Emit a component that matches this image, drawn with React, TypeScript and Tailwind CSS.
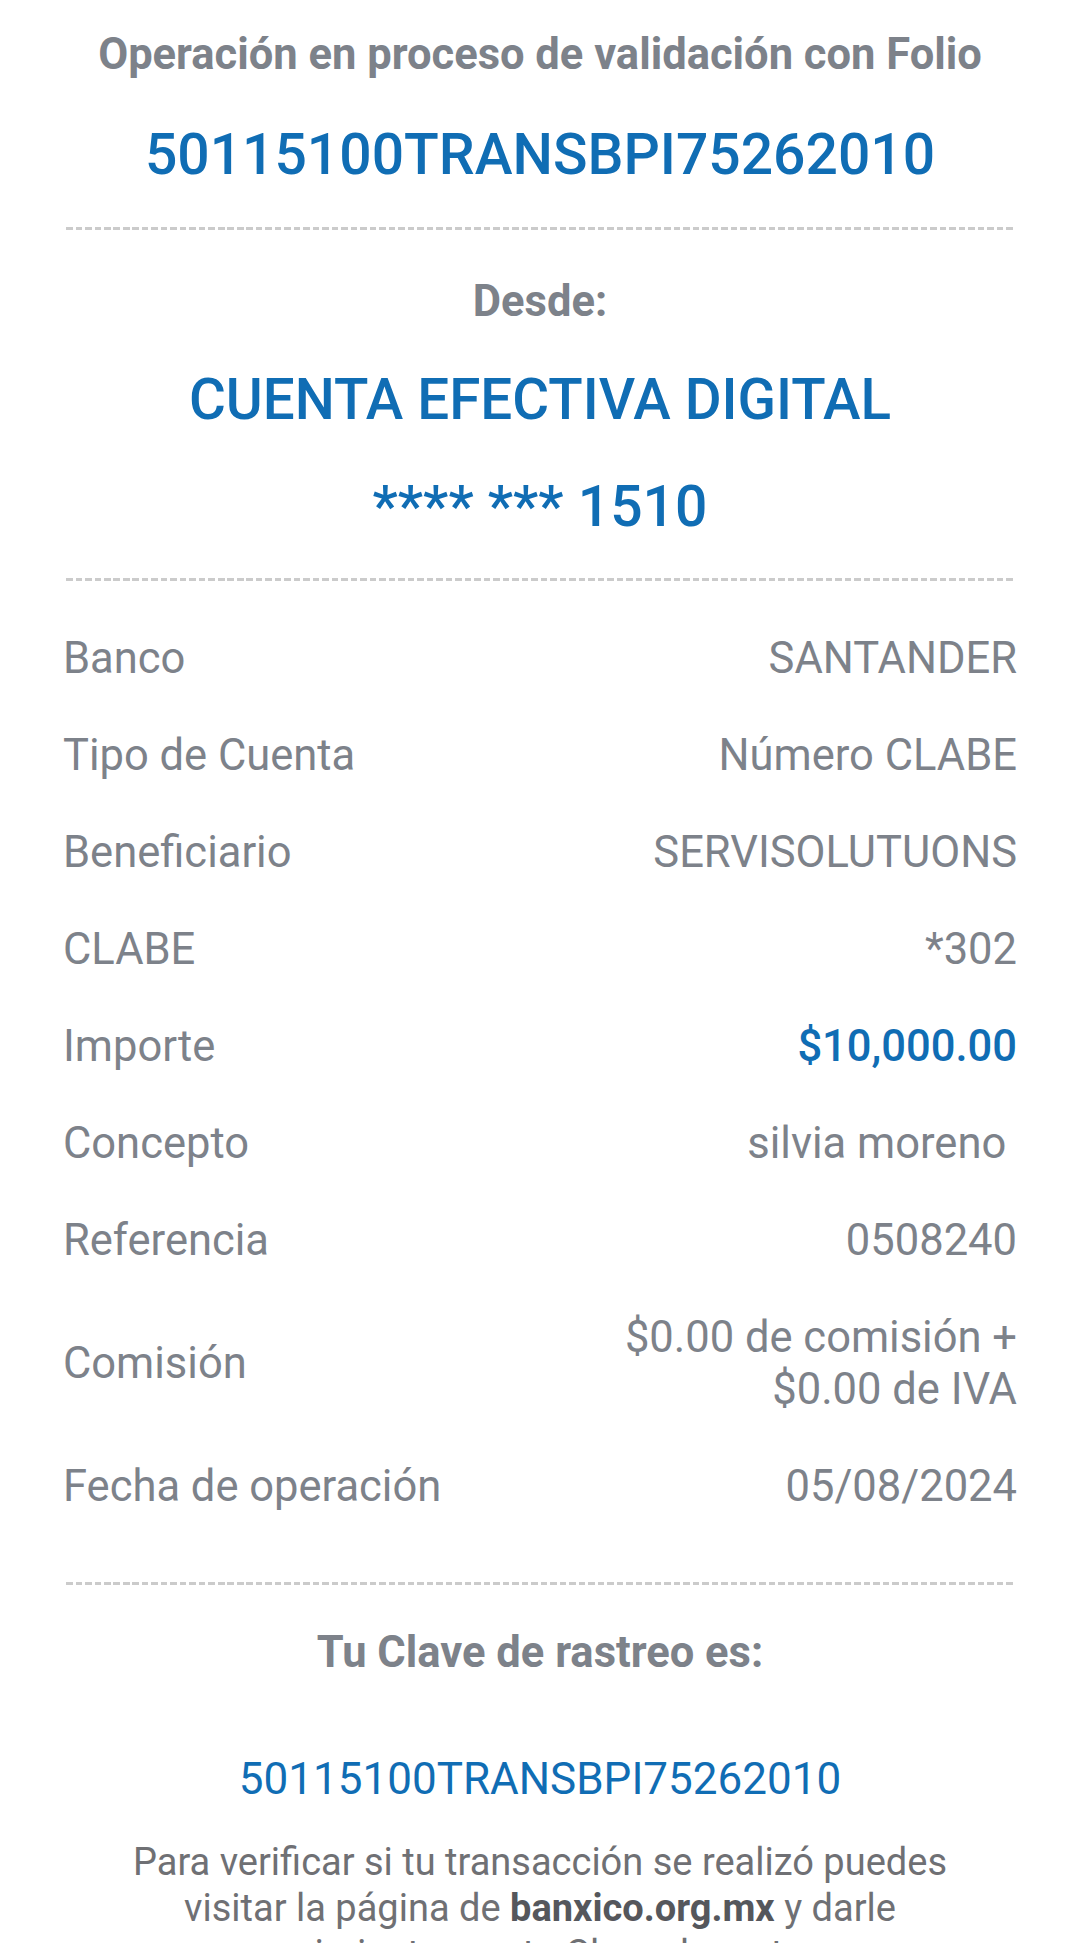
const rows: { label: string; value: string[]; accent?: boolean }[] = [
  { label: "Banco", value: ["SANTANDER"] },
  { label: "Tipo de Cuenta", value: ["Número CLABE"] },
  { label: "Beneficiario", value: ["SERVISOLUTUONS"] },
  { label: "CLABE", value: ["*302"] },
  { label: "Importe", value: ["$10,000.00"], accent: true },
  { label: "Concepto", value: ["silvia moreno\u00a0"] },
  { label: "Referencia", value: ["0508240"] },
  { label: "Comisión", value: ["$0.00 de comisión +", "$0.00 de IVA"] },
  { label: "Fecha de operación", value: ["05/08/2024"] },
]

function Dashes() {
  return (
    <div className="mx-[66px] h-[3px] bg-[repeating-linear-gradient(to_right,#cbcbcb_0_6.5px,transparent_6.5px_9.5px)]" />
  )
}

export default function App() {
  return (
    <div className="min-h-screen bg-white font-['Roboto',sans-serif] text-[#7d828a]">
      <div className="pt-[31px] text-center">
        <div className="text-[43.5px] font-bold leading-[48px]">Operación en proceso de validación con Folio</div>
        <div className="mt-[42px] text-[57px] font-medium leading-[68px] text-[#106db4]">50115100TRANSBPI75262010</div>
      </div>

      <div className="mt-[38px]">
        <Dashes />
      </div>

      <div className="pt-[48px] text-center">
        <div className="text-[43.5px] font-bold leading-[48px]">Desde:</div>
        <div className="mt-[40px] text-[56.5px] font-medium leading-[68px] text-[#106db4]">CUENTA EFECTIVA DIGITAL</div>
        <div className="mt-[39px] text-[57px] font-medium leading-[68px] text-[#106db4]">**** *** 1510</div>
      </div>

      <div className="mt-[37px]">
        <Dashes />
      </div>

      <div className="px-[63px] pt-[29px]">
        {rows.map((r) => (
          <div key={r.label} className="flex items-center justify-between py-[22.5px] text-[43.5px] leading-[52px]">
            <span>{r.label}</span>
            <div className={`text-right ${r.accent ? "font-medium text-[#106db4]" : ""}`}>
              {r.value.map((v) => (
                <div key={v}>{v}</div>
              ))}
            </div>
          </div>
        ))}
      </div>

      <div className="mt-[47px]">
        <Dashes />
      </div>

      <div className="px-[115px] text-center">
        <div className="mt-[43px] text-[43.5px] font-bold leading-[50px]">Tu Clave de rastreo es:</div>
        <div className="mt-[75px] text-[44px] leading-[52px] text-[#106db4]">50115100TRANSBPI75262010</div>
        <p className="mt-[34px] text-[38px] leading-[46px] text-[#6f7074]">
          Para verificar si tu transacción se realizó puedes visitar la página de{" "}
          <span className="font-bold text-[#55575c]">banxico.org.mx</span> y darle seguimiento con tu Clave de rastreo.
        </p>
      </div>
    </div>
  )
}
